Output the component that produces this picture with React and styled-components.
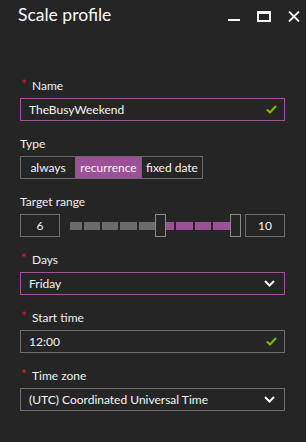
import React from "react";
import styled, { createGlobalStyle } from "styled-components";

const GlobalStyle = createGlobalStyle`
  body {
    margin: 0;
    background: #252525;
    font-family: Lato, "Open Sans", sans-serif;
    color: #f2f2f2;
  }
`;

const Blade = styled.div`
  width: 306px;
  height: 442px;
  background: #252525;
  overflow: hidden;
`;

const Header = styled.div`
  height: 30px;
  display: flex;
  align-items: center;
  padding: 0 6px 0 18px;
`;

const Title = styled.h1`
  flex: 1;
  margin: 0;
  font-size: 17.5px;
  font-weight: 400;
  line-height: 30px;
  color: #fafafa;
`;

const WindowButtons = styled.div`
  display: flex;
  align-items: center;
  gap: 17px;
  padding-top: 2px;
`;

const Form = styled.div`
  padding: 47px 21px 0 20px;
  display: flex;
  flex-direction: column;
`;

const Field = styled.div`
  display: flex;
  flex-direction: column;
  margin-bottom: 14px;
`;

const Label = styled.div`
  height: 18px;
  line-height: 18px;
  margin-bottom: 3px;
  font-size: 12px;
  color: #f0f0f0;
  display: flex;
  align-items: center;
`;

const Star = styled.span`
  color: #e3182d;
  font-size: 13px;
  width: 11px;
  margin-left: 1px;
  line-height: 1;
  position: relative;
  top: -2px;
`;

const Box = styled.div`
  height: 23px;
  box-sizing: border-box;
  border: 1px solid ${(p) => (p.$focus ? "#9d549a" : "#6f6f6f")};
  display: flex;
  align-items: center;
  padding: 0 7px 0 8px;
  font-size: 12px;
  color: #f5f5f5;
`;

const BoxText = styled.span`
  flex: 1;
`;

const Segments = styled.div`
  display: flex;
  height: 23px;
`;

const Segment = styled.div`
  box-sizing: border-box;
  width: ${(p) => p.$w}px;
  border: 1px solid #6b6b6b;
  margin-left: -1px;
  &:first-child {
    margin-left: 0;
  }
  background: ${(p) => (p.$active ? "#9c5098" : "transparent")};
  display: flex;
  align-items: center;
  justify-content: center;
  font-size: 12px;
  color: #f5f5f5;
`;

const RangeRow = styled.div`
  display: flex;
  align-items: center;
  height: 23px;
`;

const NumBox = styled.div`
  width: 40px;
  height: 23px;
  box-sizing: border-box;
  border: 1px solid #6f6f6f;
  display: flex;
  align-items: center;
  justify-content: center;
  font-size: 12px;
  color: #f5f5f5;
`;

const Track = styled.div`
  flex: 1;
  display: flex;
  align-items: center;
  margin: 0 3px 0 10px;
`;

const Tick = styled.div`
  height: 8px;
  width: ${(p) => p.$w}px;
  margin-right: ${(p) => p.$gap}px;
  background: ${(p) => (p.$on ? "#9c5098" : "#6b6b6b")};
`;

const Handle = styled.div`
  width: 11px;
  height: 23px;
  box-sizing: border-box;
  border: 1px solid #8c8c8c;
  background: #252525;
`;

const Check = () => (
  <svg width="11" height="9" viewBox="0 0 11 9">
    <path d="M1 4.5 L4 7.5 L10 1" fill="none" stroke="#7fba00" strokeWidth="2" />
  </svg>
);

const Chevron = () => (
  <svg width="11" height="7" viewBox="0 0 11 7" style={{ marginRight: 2 }}>
    <path d="M1 1 L5.5 5.5 L10 1" fill="none" stroke="#f5f5f5" strokeWidth="2" />
  </svg>
);

const Minimize = () => (
  <svg width="12" height="12" viewBox="0 0 12 12">
    <rect x="0" y="9" width="12" height="2" fill="#f5f5f5" />
  </svg>
);

const Maximize = () => (
  <svg width="14" height="11" viewBox="0 0 14 11">
    <path d="M0 0 H14 V11 H0 Z M2 3 V9 H12 V3 Z" fill="#f5f5f5" fillRule="evenodd" />
  </svg>
);

const Close = () => (
  <svg width="12" height="11" viewBox="0 0 12 11">
    <path d="M1 0.5 L11 10.5 M11 0.5 L1 10.5" stroke="#f5f5f5" strokeWidth="1.8" />
  </svg>
);

const FieldLabel = ({ required, children }) => (
  <Label>
    {required && <Star>*</Star>}
    {children}
  </Label>
);

const gray = [12, 16, 16, 17, 16];
const purple = [8, 17, 16, 17];

export default function App() {
  return (
    <Blade>
      <GlobalStyle />
      <Header>
        <Title>Scale profile</Title>
        <WindowButtons>
          <Minimize />
          <Maximize />
          <Close />
        </WindowButtons>
      </Header>
      <Form>
        <Field>
          <FieldLabel required>Name</FieldLabel>
          <Box $focus>
            <BoxText>TheBusyWeekend</BoxText>
            <Check />
          </Box>
        </Field>
        <Field>
          <FieldLabel>Type</FieldLabel>
          <Segments>
            <Segment $w={56}>always</Segment>
            <Segment $w={67} $active>recurrence</Segment>
            <Segment $w={62}>fixed date</Segment>
          </Segments>
        </Field>
        <Field>
          <FieldLabel>Target range</FieldLabel>
          <RangeRow>
            <NumBox>6</NumBox>
            <Track>
              {gray.map((w, i) => (
                <Tick key={"g" + i} $w={w} $gap={i === gray.length - 1 ? 0 : 2} />
              ))}
              <Handle />
              {purple.map((w, i) => (
                <Tick key={"p" + i} $w={w} $gap={i === purple.length - 1 ? 0 : 2} $on />
              ))}
              <Handle />
            </Track>
            <NumBox>10</NumBox>
          </RangeRow>
        </Field>
        <Field>
          <FieldLabel required>Days</FieldLabel>
          <Box $focus>
            <BoxText>Friday</BoxText>
            <Chevron />
          </Box>
        </Field>
        <Field>
          <FieldLabel required>Start time</FieldLabel>
          <Box>
            <BoxText>12:00</BoxText>
            <Check />
          </Box>
        </Field>
        <Field>
          <FieldLabel required>Time zone</FieldLabel>
          <Box>
            <BoxText>(UTC) Coordinated Universal Time</BoxText>
            <Chevron />
          </Box>
        </Field>
      </Form>
    </Blade>
  );
}
